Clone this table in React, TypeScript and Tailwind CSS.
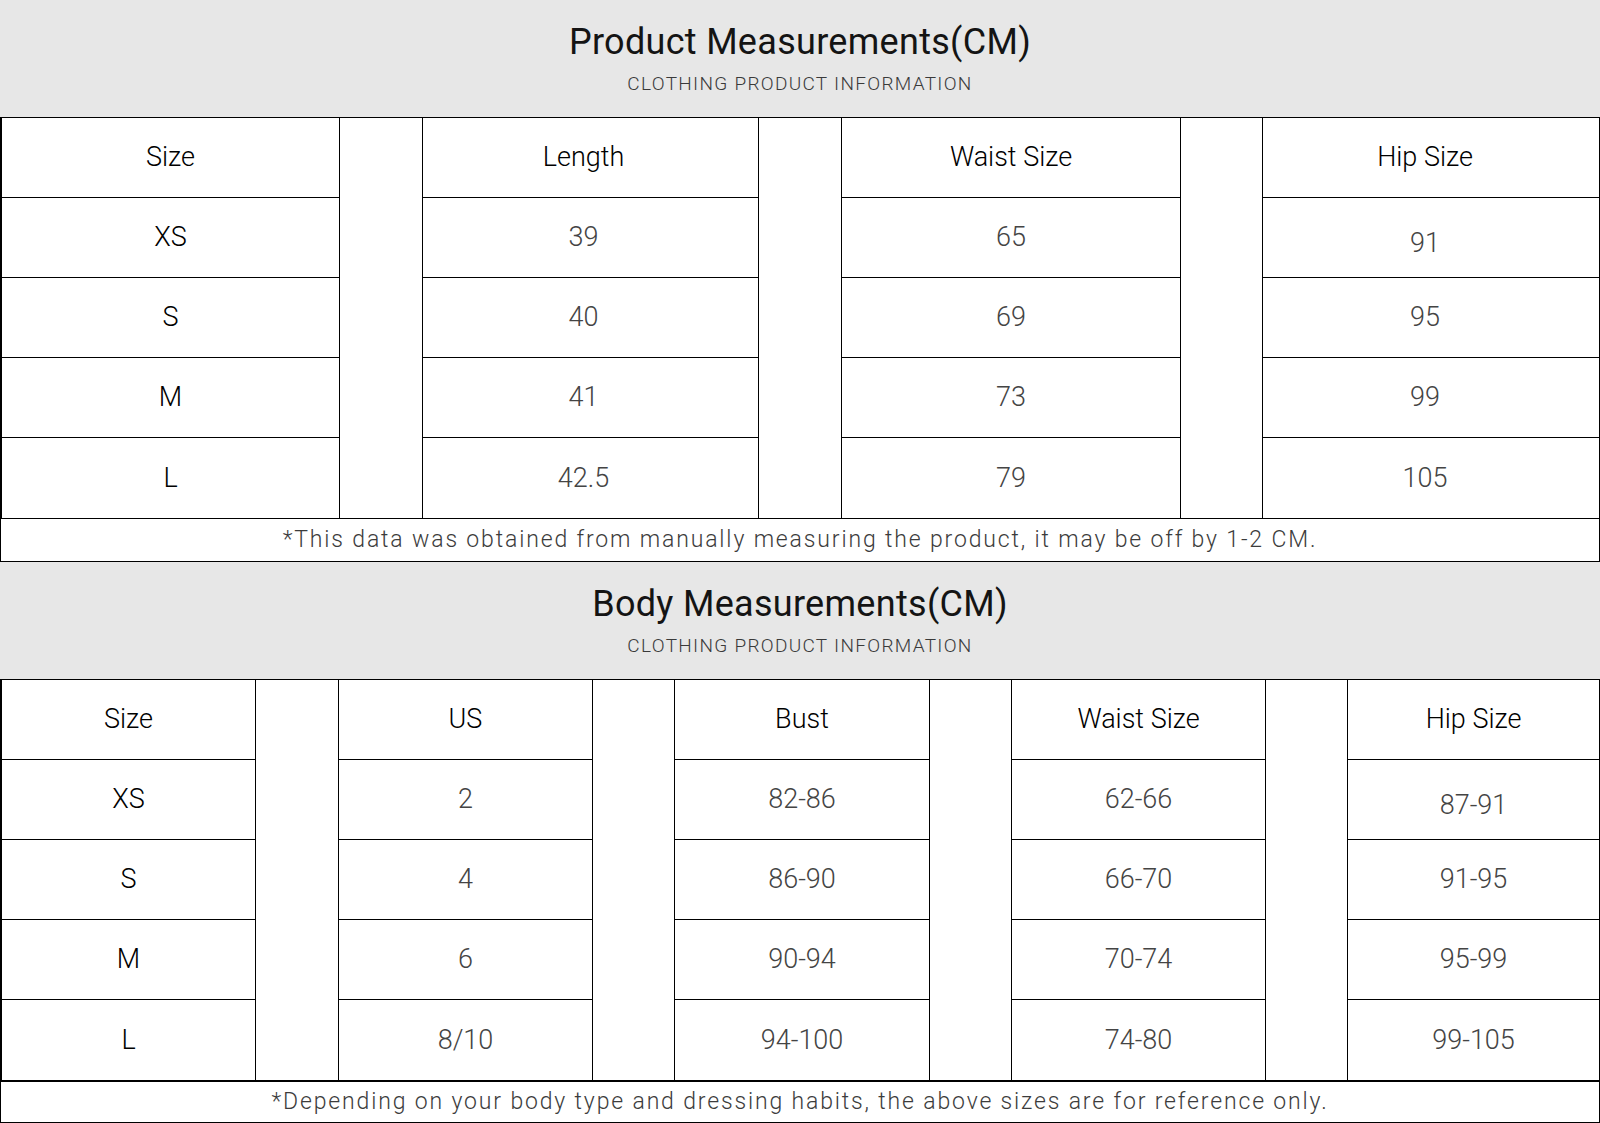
import React from 'react';

type Col = { title: string; width: string; values: string[]; lowFirst?: boolean; shift?: string };

const productCols: Col[] = [
  { title: 'Size', width: 'w-[340px]', values: ['XS', 'S', 'M', 'L'] },
  { title: 'Length', width: 'w-[337px]', values: ['39', '40', '41', '42.5'], shift: 'pr-[14px]' },
  { title: 'Waist Size', width: 'w-[340px]', values: ['65', '69', '73', '79'] },
  { title: 'Hip Size', width: 'w-[338px]', values: ['91', '95', '99', '105'], lowFirst: true, shift: 'pr-[12px]' },
];
const productGaps = ['w-[82px]', 'w-[82px]', 'w-[81px]'];

const bodyCols: Col[] = [
  { title: 'Size', width: 'w-[256px]', values: ['XS', 'S', 'M', 'L'] },
  { title: 'US', width: 'w-[255px]', values: ['2', '4', '6', '8/10'] },
  { title: 'Bust', width: 'w-[256px]', values: ['82-86', '86-90', '90-94', '94-100'] },
  { title: 'Waist Size', width: 'w-[255px]', values: ['62-66', '66-70', '70-74', '74-80'] },
  { title: 'Hip Size', width: 'w-[253px]', values: ['87-91', '91-95', '95-99', '99-105'], lowFirst: true },
];
const bodyGaps = ['w-[82px]', 'w-[81px]', 'w-[81px]', 'w-[81px]'];

function Banner({ title }: { title: string }) {
  return (
    <div className="h-[117px] bg-[#e7e7e7] flex flex-col items-center">
      <h1 className="mt-[20px] text-[36px] leading-[44px] text-[#141414] tracking-[0.3px]">{title}</h1>
      <p className="mt-[8px] text-[19px] leading-[24px] text-[#3a3a3a] tracking-[1.3px] font-light">
        CLOTHING PRODUCT INFORMATION
      </p>
    </div>
  );
}

function Column({ col, first }: { col: Col; first: boolean }) {
  const shift = col.shift ?? '';
  return (
    <div className={`${col.width} shrink-0 flex flex-col border-x border-black ${first ? 'border-l-2' : ''}`}>
      <div className={`h-[80px] border-b border-black flex items-center justify-center text-[27px] font-light text-black ${shift}`}>
        {col.title}
      </div>
      {col.values.map((v, i) => (
        <div
          key={v}
          className={`h-[80px] flex items-center justify-center text-[27px] font-light ${shift} ${
            i < col.values.length - 1 ? 'border-b border-black' : ''
          } ${first ? 'text-black' : 'text-[#444]'} ${col.lowFirst && i === 0 ? 'pt-[12px] text-[#111]' : ''}`}
        >
          {v}
        </div>
      ))}
    </div>
  );
}

function SizeTable({
  cols,
  gaps,
  note,
  noteHeight,
  thickBottom,
}: {
  cols: Col[];
  gaps: string[];
  note: string;
  noteHeight: string;
  thickBottom?: boolean;
}) {
  return (
    <div className="flex flex-col">
      <div className="flex border-t border-black">
        {cols.map((c, i) => (
          <React.Fragment key={c.title}>
            <Column col={c} first={i === 0} />
            {i < gaps.length && <div className={`${gaps[i]} shrink-0 bg-white`} />}
          </React.Fragment>
        ))}
      </div>
      <div
        className={`${noteHeight} border border-black ${thickBottom ? 'border-t-2' : ''} flex items-center justify-center text-[23px] font-light text-[#3c3c3c] tracking-[1.85px]`}
      >
        {note}
      </div>
    </div>
  );
}

export default function App() {
  return (
    <div
      className="w-[1600px] h-[1123px] bg-white overflow-hidden"
      style={{ fontFamily: 'Roboto, "Liberation Sans", sans-serif' }}
    >
      <Banner title="Product Measurements(CM)" />
      <SizeTable
        cols={productCols}
        gaps={productGaps}
        noteHeight="h-[44px]"
        note="*This data was obtained from manually measuring the product, it may be off by 1-2 CM."
      />
      <Banner title="Body Measurements(CM)" />
      <SizeTable
        cols={bodyCols}
        gaps={bodyGaps}
        noteHeight="h-[43px]"
        thickBottom
        note="*Depending on your body type and dressing habits, the above sizes are for reference only."
      />
    </div>
  );
}
